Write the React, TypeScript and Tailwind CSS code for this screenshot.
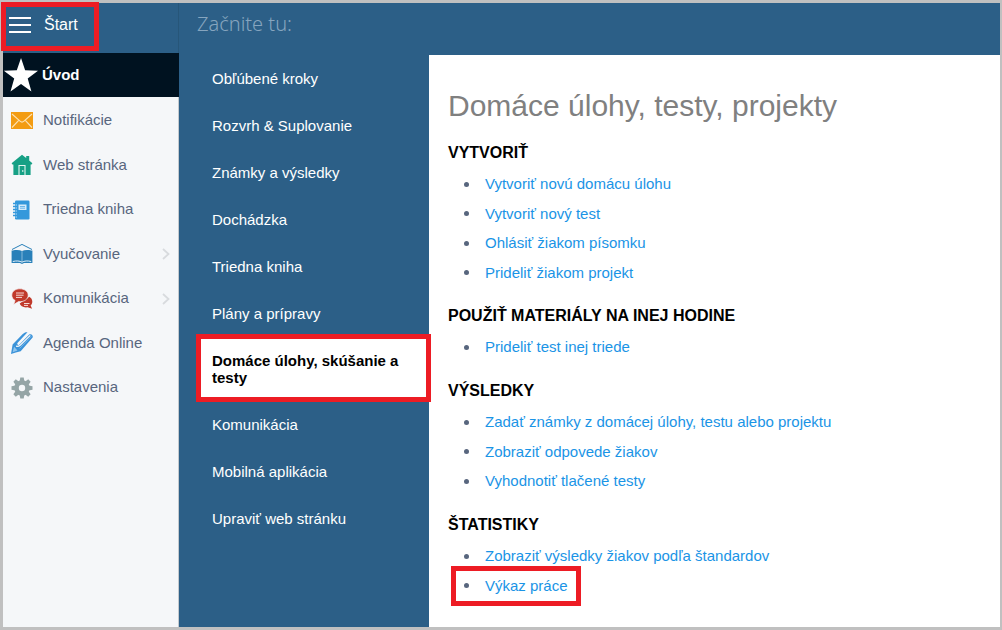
import React, { useState } from 'react';

interface NavItem {
  label: string;
  icon: React.ReactNode;
  hasChildren?: boolean;
}

interface Section {
  title: string;
  links: string[];
}

const EnvelopeIcon = () => (
  <svg viewBox="0 0 22 17" className="w-[22px]" aria-hidden="true">
    <rect width="22" height="17" fill="#f39c12" />
    <path d="M1 2l8 7.2c1.2 1.1 2.8 1.1 4 0L21 2M1 15.5l6.5-6.8M21 15.5l-6.5-6.8" fill="none" stroke="#fde3b4" strokeWidth="1.1" />
  </svg>
);

const HouseIcon = () => (
  <svg viewBox="0 0 22 22" className="w-[22px]" aria-hidden="true">
    <path d="M11 .8L.6 9.2l1.2 1.6.6-.4V21h17.2V10.4l.6.4 1.2-1.6-3.2-2.6V2h-3v2.1z" fill="#16a085" />
    <path d="M8 21v-9.5h6V21" fill="none" stroke="#e4f5f1" strokeWidth="1.1" />
    <path d="M11.8 16v2" stroke="#e4f5f1" strokeWidth="1" />
  </svg>
);

const NotebookIcon = () => (
  <svg viewBox="0 0 22 22" className="w-[22px]" aria-hidden="true">
    <rect x="4" y="1.5" width="14.5" height="19" rx="1.2" fill="#3498db" />
    <path d="M2 4.5h3.5M2 7.5h3.5M2 10.5h3.5M2 13.5h3.5M2 16.5h3.5" stroke="#3498db" strokeWidth="1.3" />
    <path d="M4.500 6h1.500M4.500 9h1.500M4.500 12h1.500M4.500 15h1.500M4.500 18h1.500" stroke="#b9dcf5" strokeWidth=".9" />
    <rect x="7.500" y="5.500" width="8" height="5.500" fill="#d6ebfa" />
    <path d="M9 7.500h5M9 9.200h5" stroke="#5fb0e6" strokeWidth=".9" />
  </svg>
);

const BookIcon = () => (
  <svg viewBox="0 0 22 22" className="w-[22px]" aria-hidden="true">
    <path d="M1 6.500L11 1.400l10 5.100" fill="none" stroke="#2980b9" strokeWidth="1" />
    <path d="M.6 7.500h1.200c3.400-.8 6.800-.6 9.200.4 2.400-1 5.800-1.200 9.200-.4h1.200V20h-8.400l-2 1-2-1H.6z" fill="#2980b9" />
    <path d="M11 8.200v10.600" stroke="#9cc6e2" strokeWidth=".8" />
    <path d="M1.800 18.500c3.400-.9 7-.7 9.200.7 2.200-1.400 5.800-1.600 9.200-.7" fill="none" stroke="#e3f0f8" strokeWidth="1" />
  </svg>
);

const ChatIcon = () => (
  <svg viewBox="0 0 22 22" className="w-[22px]" aria-hidden="true">
    <path d="M18.300 8.800c1.900 1.100 3 2.900 3 4.900 0 1.500-.6 2.800-1.700 3.800l1.500 3.300-4.400-1.500c-3.900.6-7.400-.9-8-3.700z" fill="#c0392b" />
    <path d="M8.800.8C4.200.8.8 3.500.8 7.200c0 2.300 1.200 4.200 3.300 5.300l-1.500 4 5-2.900c5.800.5 9.600-2.500 9.600-6.400C17.200 3.500 13.500.8 8.800.8z" fill="#c0392b" stroke="#f5f7f9" strokeWidth=".7" />
    <path d="M5 5h8M5 7.200h7.500M5 9.400h6M13 15.500h5.500M13 17.400h4" stroke="#f7d9d5" strokeWidth="1" />
  </svg>
);

const PencilIcon = () => (
  <svg viewBox="0 0 22 22" className="w-[22px]" aria-hidden="true">
    <path d="M0 22l1.600-9.500L11.500 2.300C13 .7 14.800.1 16.500.3l-9.800 10.400c-.6.7-.6 1.400-.1 1.900.6.500 1.300.4 1.900-.2L18.200 2.600c1.100-.6 2.400-.3 3.100.7.400.6.600 1.300.5 2L9.700 19.200 4.800 20.600z" fill="#3b93d9" />
    <path d="M5 14.200c1.800.3 2.900.1 4.200-1L19.300 3.400" fill="none" stroke="#f5f7f9" strokeWidth="1.200" />
    <path d="M8.600 16.400L20.400 4.300" fill="none" stroke="#9ccbee" strokeWidth=".6" />
    <path d="M1.600 20.300l1.500-5.600 3.400 3.900z" fill="#8fc5ee" />
  </svg>
);

const GearIcon = () => (
  <svg viewBox="0 0 22 22" className="w-[22px]" aria-hidden="true">
    <g fill="#95a5a6">
      <path fillRule="evenodd" d="M11 3.300a7.700 7.700 0 100 15.400 7.700 7.700 0 000-15.400zm0 4.500a3.200 3.200 0 110 6.400 3.200 3.200 0 010-6.400z" />
      {[0, 45, 90, 135, 180, 225, 270, 315].map((angle) => (
        <path key={angle} d="M8.600 4.500L9.300.5h3.400l.7 4z" transform={`rotate(${angle} 11 11)`} />
      ))}
    </g>
  </svg>
);

const navItems: NavItem[] = [
  { label: 'Notifikácie', icon: <EnvelopeIcon /> },
  { label: 'Web stránka', icon: <HouseIcon /> },
  { label: 'Triedna kniha', icon: <NotebookIcon /> },
  { label: 'Vyučovanie', icon: <BookIcon />, hasChildren: true },
  { label: 'Komunikácia', icon: <ChatIcon />, hasChildren: true },
  { label: 'Agenda Online', icon: <PencilIcon /> },
  { label: 'Nastavenia', icon: <GearIcon /> },
];

const topics = [
  'Obľúbené kroky',
  'Rozvrh & Suplovanie',
  'Známky a výsledky',
  'Dochádzka',
  'Triedna kniha',
  'Plány a prípravy',
  'Domáce úlohy, skúšanie a testy',
  'Komunikácia',
  'Mobilná aplikácia',
  'Upraviť web stránku',
];

const sections: Section[] = [
  {
    title: 'VYTVORIŤ',
    links: ['Vytvoriť novú domácu úlohu', 'Vytvoriť nový test', 'Ohlásiť žiakom písomku', 'Prideliť žiakom projekt'],
  },
  { title: 'POUŽIŤ MATERIÁLY NA INEJ HODINE', links: ['Prideliť test inej triede'] },
  {
    title: 'VÝSLEDKY',
    links: ['Zadať známky z domácej úlohy, testu alebo projektu', 'Zobraziť odpovede žiakov', 'Vyhodnotiť tlačené testy'],
  },
  { title: 'ŠTATISTIKY', links: ['Zobraziť výsledky žiakov podľa štandardov', 'Výkaz práce'] },
];

const Sidebar = () => (
  <aside className="flex w-44 shrink-0 flex-col">
    <div className="h-[50px] border-r border-[#275679] bg-[#2c5f87]">
      <button type="button" className="relative flex h-11 items-center gap-3 pl-1.5 text-base text-white">
        <svg viewBox="0 0 22 16" className="w-[22px]" aria-hidden="true">
          <path d="M0 1h22M0 8h22M0 15h22" stroke="#fff" strokeWidth="2" />
        </svg>
        <span className="pl-px">Štart</span>
        <span className="pointer-events-none absolute -top-px -right-[21px] -bottom-1 -left-0.5 border-[5px] border-[#ed1c24]" />
      </button>
    </div>
    <a href="#uvod" className="flex h-11 items-center gap-1 bg-[#001220] text-[15px] font-bold text-white">
      <svg viewBox="0 0 34 33" className="w-[35px]" aria-hidden="true">
        <path d="M17.500 0l4 11.900 12.500.4-10 7.700 3.600 12.500L17.500 25.200 7.300 32.500 10.900 20 .8 12.300l12.600-.4z" fill="#fff" />
      </svg>
      Úvod
    </a>
    <nav className="flex-1 border-r border-[#c3c9ce] bg-[#f5f7f9] pt-px">
      {navItems.map((item) => (
        <a
          key={item.label}
          href="#"
          className="flex h-11 items-center gap-2.5 pr-2 pl-2 text-[15px] text-[#58667e] odd:h-[45px]"
        >
          {item.icon}
          <span className="flex-1 whitespace-nowrap">{item.label}</span>
          {item.hasChildren && (
            <svg viewBox="0 0 8 12" className="w-2" aria-hidden="true">
              <path d="M1 1l5.500 5L1 11" fill="none" stroke="#d8dbde" strokeWidth="1.800" />
            </svg>
          )}
        </a>
      ))}
    </nav>
  </aside>
);

const App: React.FC = () => {
  const [active, setActive] = useState(6);

  return (
    <div className="flex min-h-screen border-[3px] border-r-2 border-[#c0c0c0] bg-[#2c5f87] font-['Liberation_Sans',Arial,sans-serif]">
      <Sidebar />
      <div className="flex flex-1 flex-col">
        <header className="h-[52px] pt-[7px] pl-[18px] font-['Noto_Sans',sans-serif] text-xl font-light text-[#86a5bf]">
          Začnite tu:
        </header>
        <div className="flex flex-1">
          <ul className="w-[250px] shrink-0 pl-[17px]">
            {topics.map((topic, i) => (
              <li key={topic} className="relative">
                <button
                  type="button"
                  onClick={() => setActive(i)}
                  className={`w-full py-[15px] pr-4 pl-4 text-left text-[15px] leading-[17px] ${
                    i === active ? 'bg-white font-bold text-black' : 'text-white'
                  }`}
                >
                  {topic}
                </button>
                {i === active && (
                  <span className="pointer-events-none absolute -top-[3px] -right-0.5 -bottom-px left-0 border-[5px] border-[#ed1c24]" />
                )}
              </li>
            ))}
          </ul>
          <main className="flex-1 bg-white px-[19px] pt-8">
            <h1 className="text-[30px] leading-[38px] text-[#808080]">Domáce úlohy, testy, projekty</h1>
            {sections.map((section) => (
              <section key={section.title} className="pt-[17px]">
                <h2 className="text-base leading-[22px] font-bold text-black">{section.title}</h2>
                <ul className="pt-[5px] pb-px">
                  {section.links.map((link) => (
                    <li key={link} className="flex h-[30px] items-center pl-4 even:h-[29px]">
                      <span className="size-[5px] rounded-full bg-[#58667e]" />
                      <span className="relative ml-4">
                        <a href="#" className="text-[15px] text-[#1a94e6]">
                          {link}
                        </a>
                        {link === 'Výkaz práce' && (
                          <span className="pointer-events-none absolute -top-2 -right-[13px] -bottom-2 -left-[34px] border-[5px] border-[#ed1c24]" />
                        )}
                      </span>
                    </li>
                  ))}
                </ul>
              </section>
            ))}
          </main>
        </div>
      </div>
    </div>
  );
};

export default App;
